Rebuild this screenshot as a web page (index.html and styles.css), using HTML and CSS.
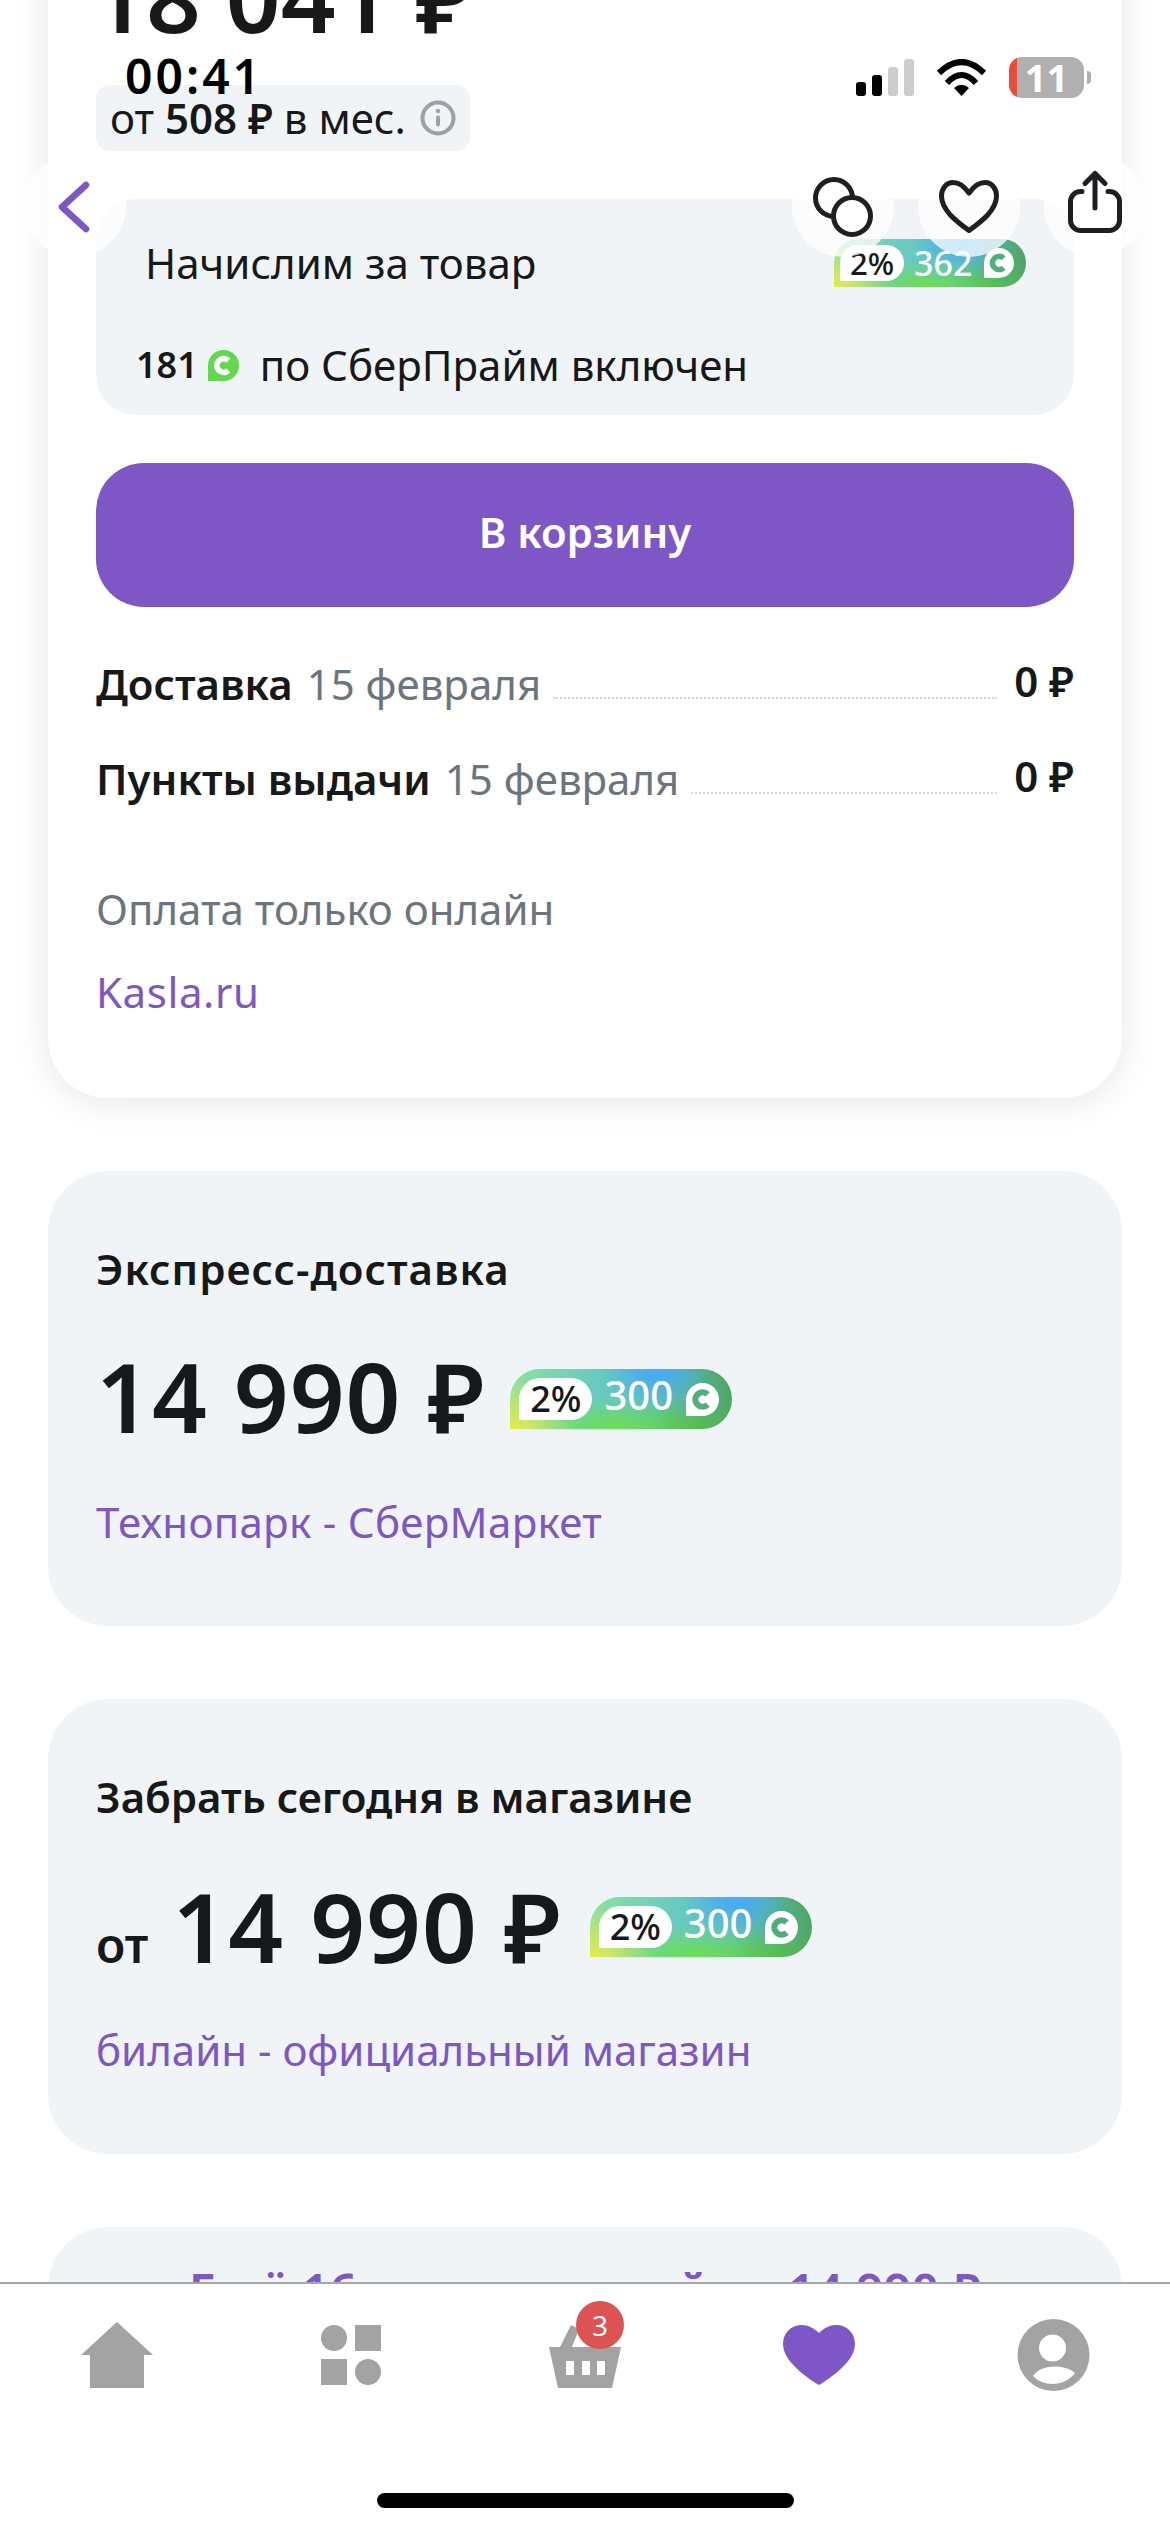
FILE: index.html
```html
<!DOCTYPE html>
<html lang="ru">
<head>
<meta charset="utf-8">
<title>Товар</title>
<link rel="stylesheet" href="styles.css">
</head>
<body>
<main class="page">
  <section class="sheet">
    <div class="top-price">18 041 ₽</div>
    <div class="installment">
      <span>от <b>508 ₽</b> в мес.</span>
      <svg class="info" viewBox="0 0 36 36"><circle cx="18" cy="18" r="15.5" fill="none" stroke="#9ba1a8" stroke-width="4"/><circle cx="18" cy="11" r="2.2" fill="#9ba1a8"/><rect x="16" y="15.500" width="4" height="11" rx="2" fill="#9ba1a8"/></svg>
    </div>
    <div class="bonus">
      <div class="bonus-top">
        <span>Начислим за товар</span>
        <span class="badge badge-sm">
          <span class="chip">2%</span><span class="amount">362</span><span class="coin"><svg viewBox="0 0 32 32"><path d="M21 11a7 7 0 1 0 0 10"/></svg></span>
        </span>
      </div>
      <div class="bonus-prime">
        <b class="prime-num">181</b>
        <span class="coin coin-green"><svg viewBox="0 0 32 32"><path d="M21 11a7 7 0 1 0 0 10"/></svg></span>
        <span class="prime-text">по СберПрайм включен</span>
      </div>
    </div>
    <button class="buy">В корзину</button>
    <div class="ship ship-first">
      <b>Доставка</b><span class="muted date">15 февраля</span><i class="dots"></i><b class="cost">0 ₽</b>
    </div>
    <div class="ship ship-second">
      <b>Пункты выдачи</b><span class="muted date">15 февраля</span><i class="dots"></i><b class="cost">0 ₽</b>
    </div>
    <p class="muted pay">Оплата только онлайн</p>
    <a class="link seller">Kasla.ru</a>
  </section>

  <section class="offer">
    <h2 class="offer-title offer-title-wide">Экспресс-доставка</h2>
    <div class="price-row">
      <span class="price">14 990 ₽</span>
      <span class="badge">
        <span class="chip">2%</span><span class="amount">300</span><span class="coin"><svg viewBox="0 0 32 32"><path d="M21 11a7 7 0 1 0 0 10"/></svg></span>
      </span>
    </div>
    <a class="link offer-link offer-link-wide">Технопарк - СберМаркет</a>
  </section>

  <section class="offer">
    <h2 class="offer-title">Забрать сегодня в магазине</h2>
    <div class="price-row price-row-from">
      <span class="from">от</span>
      <span class="price">14 990 ₽</span>
      <span class="badge">
        <span class="chip">2%</span><span class="amount">300</span><span class="coin"><svg viewBox="0 0 32 32"><path d="M21 11a7 7 0 1 0 0 10"/></svg></span>
      </span>
    </div>
    <a class="link offer-link">билайн - официальный магазин</a>
  </section>

  <section class="offer more">Ещё 16 предложений от 14 990 ₽</section>
</main>

<div class="actions">
  <span class="round">
    <svg viewBox="0 0 102 102"><path class="ic-purple" d="M62 30 38 52 62 74"/></svg>
  </span>
  <span class="action-group">
    <span class="round">
      <svg viewBox="0 0 102 102"><circle class="ic" cx="42" cy="43" r="18.500"/><circle class="ic ic-fill" cx="60" cy="61" r="18.500"/></svg>
    </span>
    <span class="round">
      <svg viewBox="0 0 102 102"><path class="ic" d="M51 38C46 31 41 27.500 35 27.500 28 27.500 23.500 34 23.500 41 23.500 55 38 66 51 75.500 64 66 78.500 55 78.500 41 78.500 34 74 27.500 67 27.500 61 27.500 56 31 51 38Z"/></svg>
    </span>
    <span class="round">
      <svg viewBox="0 0 102 102"><path class="ic" d="M38 36.500H36.500A10 10 0 0 0 26.500 46.500V65.500A10 10 0 0 0 36.500 75.500H65.500A10 10 0 0 0 75.500 65.500V46.500A10 10 0 0 0 65.500 36.500H64M51 53V19M41 28.500 51 18.500 61 28.500"/></svg>
    </span>
  </span>
</div>

<header class="status">
  <span class="time">00:41</span>
  <span class="status-icons">
    <svg class="signal" viewBox="0 0 58 37"><rect x="0" y="23" width="10" height="14" rx="3"/><rect x="16" y="16" width="10" height="21" rx="3"/><rect class="off" x="32" y="8" width="10" height="29" rx="3"/><rect class="off" x="48" y="0" width="10" height="37" rx="3"/></svg>
    <svg class="wifi" viewBox="0 0 51 37"><path d="M3 14Q25.500-8 48 14M11 24Q25.500 8 40 24" fill="none" stroke="#000" stroke-width="6"/><path d="M25.500 37 18 29Q25.500 22.500 33 29Z"/></svg>
    <span class="battery">11</span>
  </span>
</header>

<nav class="tabbar">
  <div class="tabs">
    <span class="tab">
      <svg viewBox="0 0 96 96"><polygon class="nav-ic" points="48,15 84,48 75,48 75,81 21,81 21,48 12,48"/></svg>
    </span>
    <span class="tab">
      <svg viewBox="0 0 96 96"><circle class="nav-ic" cx="31" cy="31" r="13"/><rect class="nav-ic" x="52" y="18" width="26" height="26"/><rect class="nav-ic" x="18" y="52" width="26" height="26"/><circle class="nav-ic" cx="65" cy="65" r="13"/></svg>
    </span>
    <span class="tab">
      <svg viewBox="0 0 96 96"><polygon class="nav-ic" points="23,40 34,18 42,22 35,40"/><polygon class="nav-ic" points="12,40 84,40 75,81 21,81"/><rect x="29" y="54" width="8" height="14" fill="#fff"/><rect x="45" y="54" width="8" height="14" fill="#fff"/><rect x="60" y="54" width="8" height="14" fill="#fff"/></svg>
      <span class="cart-count">3</span>
    </span>
    <span class="tab">
      <svg viewBox="0 0 96 96"><path fill="#7f56c5" d="M48 26C43 21 37 18 31 18 20 18 12 26 12 37 12 52 30 67 48 78 66 67 84 52 84 37 84 26 76 18 65 18 59 18 53 21 48 26Z"/></svg>
    </span>
    <span class="tab">
      <svg viewBox="0 0 96 96"><circle class="nav-ic" cx="48.500" cy="48" r="36"/><circle cx="47.500" cy="41" r="13.500" fill="#fff"/><path fill="#fff" d="M28 69C36 57 60 57 70 66 60 80 38 80 28 69Z"/></svg>
    </span>
  </div>
  <div class="home-bar"></div>
</nav>
</body>
</html>
```

FILE: styles.css
```css
* { box-sizing: border-box; }

html, body {
  margin: 0;
  padding: 0;
}

body {
  position: relative;
  width: 1170px;
  height: 2532px;
  overflow: hidden;
  background: #fff;
  color: #17181a;
  font-family: "Noto Sans", "Open Sans", sans-serif;
  font-size: 42px;
  line-height: 56px;
}

b { font-weight: 600; }

.page {
  display: flex;
  flex-direction: column;
  padding: 0 48px;
}

.sheet {
  margin-top: -60px;
  padding: 0 48px 78px;
  border-radius: 0 0 60px 60px;
  background: #fff;
  box-shadow: 0 4px 36px rgba(0, 0, 0, .1);
}

.top-price,
.price {
  font-size: 96px;
  line-height: 112px;
  font-weight: 600;
  white-space: nowrap;
}

.top-price {
  margin-left: -5px;
  letter-spacing: 0;
}

.price {
  letter-spacing: 1px;
}

.installment {
  display: inline-flex;
  align-items: center;
  gap: 14px;
  width: 374px;
  height: 66px;
  margin-top: 33px;
  padding: 0 14px;
  border-radius: 14px;
  background: #f1f4f7;
  vertical-align: top;
  white-space: nowrap;
}

.info {
  flex: none;
  width: 36px;
  height: 36px;
}

.bonus {
  height: 216px;
  margin-top: 48px;
  padding: 36px 48px 0 40px;
  border-radius: 40px;
  background: #f1f4f7;
}

.bonus-top {
  display: flex;
  align-items: center;
  justify-content: space-between;
  padding-left: 9px;
}

.bonus-prime {
  display: flex;
  align-items: center;
  margin-top: 46px;
}

.prime-num {
  font-size: 36px;
}

.prime-text {
  margin-left: 21px;
}

.badge {
  display: inline-flex;
  flex: none;
  align-items: center;
  width: 222px;
  height: 60px;
  padding: 0 9px;
  border-radius: 30px 30px 30px 0;
  background:
    radial-gradient(ellipse 24% 50% at 66% 8%, #46a9f4 0%, rgba(70, 169, 244, 0) 100%),
    radial-gradient(ellipse 30% 85% at 0% 100%, #e3ec4a 0%, rgba(227, 236, 74, 0) 100%),
    radial-gradient(ellipse 40% 55% at 48% 100%, #6ddf4c 0%, rgba(109, 223, 76, 0) 100%),
    radial-gradient(ellipse 30% 50% at 82% 100%, #55bb4c 0%, rgba(85, 187, 76, 0) 100%),
    linear-gradient(90deg, #8ee29a 0%, #6accc0 35%, #5fbfc8 65%, #4fa564 100%);
  background-color: #5cb85a;
}

.chip {
  display: inline-flex;
  flex: none;
  align-items: center;
  justify-content: center;
  width: 73px;
  height: 42px;
  border-radius: 21px 21px 21px 0;
  background: #fff;
  font-size: 36px;
  line-height: 42px;
  font-weight: 500;
}

.amount {
  margin-left: 12px;
  color: #fff;
  font-size: 40px;
  line-height: 42px;
  font-weight: 500;
  transform: translateY(-4px);
}

.coin {
  display: inline-flex;
  flex: none;
  width: 33px;
  height: 33px;
  margin-left: 13px;
  border-radius: 50% 50% 50% 0;
  background: #fff;
}

.coin svg {
  width: 100%;
  height: 100%;
}

.coin path {
  fill: none;
  stroke: #4fae7c;
  stroke-width: 6;
}

.coin-green {
  width: 31px;
  height: 31px;
  margin-left: 10px;
  background: #62d84e;
}

.coin-green path {
  stroke: #fff;
}

.badge-sm {
  width: 192px;
  height: 48px;
  padding: 0 6px;
  border-radius: 24px 24px 24px 0;
}

.badge-sm .chip {
  width: 64px;
  height: 36px;
  font-size: 31px;
}

.badge-sm .amount {
  margin-left: 10px;
  font-size: 34px;
  transform: none;
}

.badge-sm .coin {
  width: 30px;
  height: 30px;
  margin-left: 12px;
}

.buy {
  display: block;
  width: 100%;
  height: 144px;
  margin-top: 48px;
  padding: 0 0 6px;
  border: 0;
  border-radius: 48px;
  background: #7f56c5;
  color: #fff;
  font: 600 42px/56px "Noto Sans", sans-serif;
}

.ship {
  display: flex;
  align-items: flex-end;
  white-space: nowrap;
}

.ship-first { margin-top: 49px; }
.ship-second { margin-top: 39px; }

.muted { color: #6c757f; }

.date { margin-left: 14px; }

.dots {
  flex: 1;
  margin: 0 17px 13px 12px;
  border-bottom: 2px dotted #d0d5da;
}

.cost {
  position: relative;
  top: -3px;
}

.pay {
  margin: 74px 0 0;
}

.link {
  display: block;
  color: #7f56c5;
}

.seller {
  margin-top: 27px;
  letter-spacing: .6px;
}

.offer {
  height: 455px;
  margin-top: 73px;
  padding: 70px 48px 0;
  border-radius: 60px;
  background: #f1f4f7;
}

.offer-title {
  margin: 0;
  font-size: 42px;
  line-height: 56px;
  font-weight: 600;
}

.offer-title-wide {
  letter-spacing: 1px;
}

.price-row {
  display: flex;
  align-items: baseline;
  margin-top: 43px;
}

.price-row-from {
  position: relative;
  top: 2px;
}

.from {
  margin-right: 24px;
  font-size: 48px;
  font-weight: 600;
}

.price-row .badge {
  align-self: center;
  margin-top: 6px;
  margin-left: 25px;
}

.price-row-from .badge {
  margin-top: 2px;
  margin-left: 28px;
}

.offer-link {
  margin-top: 42px;
}

.offer-link-wide {
  letter-spacing: .3px;
}

.more {
  height: 400px;
  padding-top: 36px;
  color: #7f56c5;
  font-size: 48px;
  font-weight: 600;
  letter-spacing: .3px;
  text-align: center;
}

/* overlay action buttons */
.actions {
  position: absolute;
  top: 155px;
  left: 24px;
  right: 24px;
  display: flex;
  justify-content: space-between;
}

.action-group {
  display: flex;
  gap: 24px;
}

.round {
  display: block;
  width: 102px;
  height: 102px;
  border-radius: 50%;
  background: rgba(255, 255, 255, .75);
}

.round svg {
  display: block;
  width: 102px;
  height: 102px;
  overflow: visible;
}

.ic {
  fill: none;
  stroke: #1d1f22;
  stroke-width: 5;
  stroke-linecap: round;
  stroke-linejoin: round;
}

.ic-fill { fill: #fff; }

.ic-purple {
  fill: none;
  stroke: #7f56c5;
  stroke-width: 6.500;
  stroke-linecap: round;
  stroke-linejoin: round;
}

/* status bar */
.status {
  position: absolute;
  top: 57px;
  left: 125px;
  right: 86px;
  display: flex;
  align-items: center;
  justify-content: space-between;
  height: 41px;
}

.time {
  margin-bottom: 3px;
  color: #000;
  font-size: 48px;
  line-height: 38px;
  font-weight: 600;
  letter-spacing: 3px;
}

.status-icons {
  display: flex;
  align-items: center;
  gap: 22px;
}

.signal {
  width: 58px;
  height: 37px;
}

.signal .off { fill: #ccc; }

.wifi {
  width: 51px;
  height: 37px;
}

.battery {
  position: relative;
  width: 75px;
  height: 41px;
  border-radius: 13px;
  background: linear-gradient(90deg, #e84c3d 8px, #b0b0b0 8px);
  color: #fff;
  font-size: 38px;
  line-height: 41px;
  font-weight: 700;
  text-align: center;
}

.battery::after {
  content: "";
  position: absolute;
  top: 14px;
  left: 78px;
  width: 4px;
  height: 13px;
  border-radius: 0 4px 4px 0;
  background: #b0b0b0;
}

/* tab bar */
.tabbar {
  position: absolute;
  top: 2282px;
  left: 0;
  right: 0;
  bottom: 0;
  border-top: 2px solid #a5a7aa;
  background: #fff;
}

.tabs {
  display: flex;
  padding-top: 23px;
}

.tab {
  position: relative;
  display: flex;
  flex: 1;
  justify-content: center;
}

.tab svg {
  display: block;
  width: 96px;
  height: 96px;
}

.nav-ic { fill: #a3a3a3; }

.cart-count {
  position: absolute;
  top: -6px;
  left: 108px;
  width: 48px;
  height: 48px;
  border-radius: 50%;
  background: #dc5353;
  color: #fff;
  font-size: 28px;
  line-height: 48px;
  text-align: center;
}

.home-bar {
  width: 417px;
  height: 15px;
  margin: 90px auto 0;
  border-radius: 8px;
  background: #000;
}
```
